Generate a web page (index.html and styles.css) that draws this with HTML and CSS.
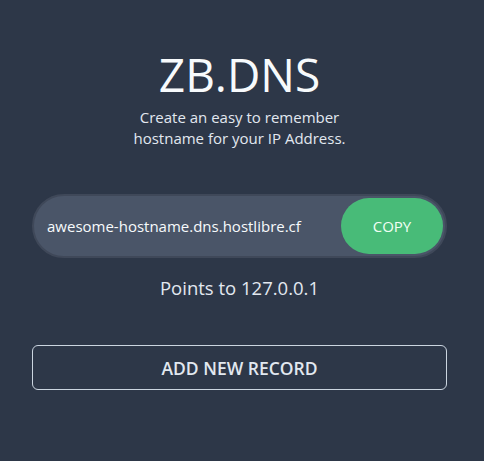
FILE: index.html
```html
<!DOCTYPE html>
<html>
<head>
<meta charset="utf-8">
<link rel="stylesheet" href="styles.css">
</head>
<body>
<main class="wrap">
  <h1 class="title">ZB.DNS</h1>
  <p class="subtitle">Create an easy to remember<br>hostname for your IP Address.</p>
  <div class="pill">
    <span class="host">awesome-hostname.dns.hostlibre.cf</span>
    <button class="copy">COPY</button>
  </div>
  <p class="points">Points to 127.0.0.1</p>
  <button class="add">ADD NEW RECORD</button>
</main>
</body>
</html>
```
FILE: styles.css
```css
html, body {
  margin: 0;
  padding: 0;
  background: #2d3748;
  height: 100%;
}
body {
  font-family: "Open Sans", "Noto Sans", sans-serif;
  color: #f7fafc;
}
.wrap {
  padding: 46px 37px 0 32px;
  display: flex;
  flex-direction: column;
  align-items: stretch;
  text-align: center;
}
.title {
  margin: 0;
  font-weight: 400;
  font-size: 46px;
  line-height: 56px;
  letter-spacing: 0;
}
.subtitle {
  margin: 5px 0 0;
  font-size: 15px;
  line-height: 21px;
  color: #e2e8f0;
}
.pill {
  margin-top: 45px;
  height: 64px;
  box-sizing: border-box;
  border-radius: 32px;
  background: #4a5568;
  border: 2px solid #3f4859;
  padding: 2px;
  display: flex;
  align-items: center;
  justify-content: space-between;
}
.host {
  padding-left: 11px;
  font-size: 15px;
  color: #f7fafc;
}
.copy {
  height: 56px;
  width: 102px;
  border: none;
  border-radius: 28px;
  background: #48bb78;
  color: #f0fff4;
  font-family: inherit;
  font-size: 15px;
}
.points {
  margin: 18px 0 0;
  font-size: 18.5px;
  line-height: 24px;
  color: #e2e8f0;
}
.add {
  margin-top: 45px;
  height: 45px;
  background: transparent;
  border: 1px solid #cbd5e0;
  border-radius: 6px;
  color: #e2e8f0;
  font-family: inherit;
  font-weight: 600;
  font-size: 17.5px;
}
```
